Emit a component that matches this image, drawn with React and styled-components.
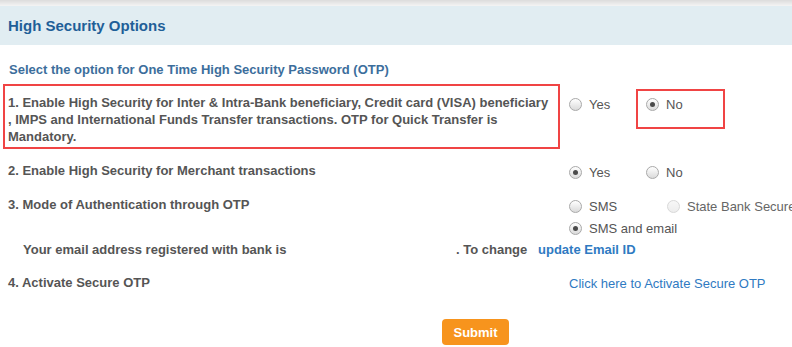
import React from "react";
import styled, { createGlobalStyle } from "styled-components";

const GlobalStyle = createGlobalStyle`
    html, body {
        margin: 0;
        padding: 0;
        background: #ffffff;
        overflow: hidden;
    }
    body {
        font-family: "Liberation Sans", Arial, sans-serif;
    }
`;

const Page = styled.div`
    width: 792px;
    height: 347px;
    background: #ffffff;
    overflow: hidden;
`;

const TopStrip = styled.div`
    height: 6px;
    background: linear-gradient(#dcdcdc, #f4f4f4);
`;

const Header = styled.div`
    height: 39px;
    background: #e1edf2;
    display: flex;
    align-items: center;
    padding-left: 8px;
`;

const Title = styled.h2`
    margin: 0;
    font-size: 15px;
    font-weight: bold;
    color: #1f5f98;
`;

const Body = styled.div`
    padding-top: 17px;
`;

const Intro = styled.div`
    font-size: 13px;
    font-weight: bold;
    color: #3c6e9c;
    line-height: 16px;
    padding-left: 9px;
`;

const Row = styled.div`
    display: grid;
    grid-template-columns: 569px 1fr;
    align-items: start;
    margin-top: ${(p) => p.$top || 0}px;
`;

const Label = styled.div`
    font-size: 13px;
    font-weight: bold;
    color: #555555;
    line-height: 17px;
    padding-left: 8px;
    ${(p) =>
        p.$boxed &&
        `
        border: 2px solid #f04444;
        margin-left: 3px;
        padding: 8px 0 2px 3px;
        width: 557px;
        box-sizing: border-box;
    `}
`;

const Options = styled.div`
    display: flex;
    flex-direction: column;
    gap: ${(p) => p.$gap || 0}px;
    padding-top: ${(p) => p.$top || 0}px;
`;

const OptionLine = styled.div`
    display: flex;
    align-items: flex-start;
`;

const Choice = styled.label`
    display: flex;
    align-items: center;
    width: ${(p) => p.$w || "auto"};
    height: 17px;
    font-size: 13px;
    line-height: 17px;
    color: ${(p) => (p.$disabled ? "#666666" : "#555555")};
    white-space: nowrap;
    box-sizing: border-box;
    ${(p) =>
        p.$boxed &&
        `
        border: 2px solid #f04444;
        height: 40px;
        width: 89px;
        margin-top: -7px;
        padding: 5px 0 0 8px;
        align-items: flex-start;
    `}
`;

const Dot = styled.span`
    width: 11px;
    height: 11px;
    margin-top: ${(p) => (p.$inBox ? "2px" : "0")};
    border-radius: 50%;
    border: 1px solid ${(p) => (p.$disabled ? "#d8d8d8" : "#a9a9a9")};
    background: ${(p) =>
        p.$disabled
            ? "linear-gradient(#f7f7f7, #ededed)"
            : "linear-gradient(#ffffff, #dadada)"};
    margin-right: 7px;
    position: relative;
    flex-shrink: 0;
    &::after {
        content: "";
        display: ${(p) => (p.$checked ? "block" : "none")};
        position: absolute;
        left: 3px;
        top: 3px;
        width: 5px;
        height: 5px;
        border-radius: 50%;
        background: #4a4a4a;
    }
`;

const EmailLine = styled.div`
    display: flex;
    font-size: 13px;
    line-height: 17px;
    font-weight: bold;
    color: #555555;
    margin-top: 4px;
    padding-left: 23px;
`;

const EmailText = styled.span`
    width: 433px;
`;

const ChangeText = styled.span`
    width: 82px;
`;

const Link = styled.a`
    color: #2f7ac2;
    text-decoration: none;
    font-weight: ${(p) => (p.$bold ? "bold" : "normal")};
    font-size: 13px;
    line-height: 17px;
    cursor: pointer;
`;

const Footer = styled.div`
    display: flex;
    padding-left: 442px;
    margin-top: 27px;
`;

const SubmitButton = styled.button`
    background: #f7941d;
    color: #ffffff;
    font-family: "Liberation Sans", Arial, sans-serif;
    font-weight: bold;
    font-size: 13px;
    border: none;
    border-radius: 4px;
    width: 67px;
    height: 26px;
    padding: 0;
    cursor: pointer;
`;

function Radio({ label, checked, disabled, w, boxed }) {
    return (
        <Choice $w={w} $disabled={disabled} $boxed={boxed}>
            <Dot $checked={checked} $disabled={disabled} $inBox={boxed} />
            {label}
        </Choice>
    );
}

export default function App() {
    return (
        <Page>
            <GlobalStyle />
            <TopStrip />
            <Header>
                <Title>High Security Options</Title>
            </Header>
            <Body>
                <Intro>Select the option for One Time High Security Password (OTP)</Intro>
                <Row $top={6}>
                    <Label $boxed>
                        1. Enable High Security for Inter &amp; Intra-Bank beneficiary, Credit card (VISA) beneficiary
                        <br />, IMPS and International Funds Transfer transactions. OTP for Quick Transfer is
                        <br />Mandatory.
                    </Label>
                    <Options $top={12}>
                        <OptionLine>
                            <Radio label="Yes" w="67px" />
                            <Radio label="No" checked boxed />
                        </OptionLine>
                    </Options>
                </Row>
                <Row $top={13}>
                    <Label>2. Enable High Security for Merchant transactions</Label>
                    <Options $top={2}>
                        <OptionLine>
                            <Radio label="Yes" checked w="77px" />
                            <Radio label="No" />
                        </OptionLine>
                    </Options>
                </Row>
                <Row $top={15}>
                    <Label>3. Mode of Authentication through OTP</Label>
                    <Options $top={2} $gap={5}>
                        <OptionLine>
                            <Radio label="SMS" w="98px" />
                            <Radio label="State Bank Secure OTP App" disabled />
                        </OptionLine>
                        <OptionLine>
                            <Radio label="SMS and email" checked />
                        </OptionLine>
                    </Options>
                </Row>
                <EmailLine>
                    <EmailText>Your email address registered with bank is</EmailText>
                    <ChangeText>. To change</ChangeText>
                    <Link $bold>update Email ID</Link>
                </EmailLine>
                <Row $top={16}>
                    <Label>4. Activate Secure OTP</Label>
                    <div>
                        <Link>Click here to Activate Secure OTP</Link>
                    </div>
                </Row>
                <Footer>
                    <SubmitButton>Submit</SubmitButton>
                </Footer>
            </Body>
        </Page>
    );
}
